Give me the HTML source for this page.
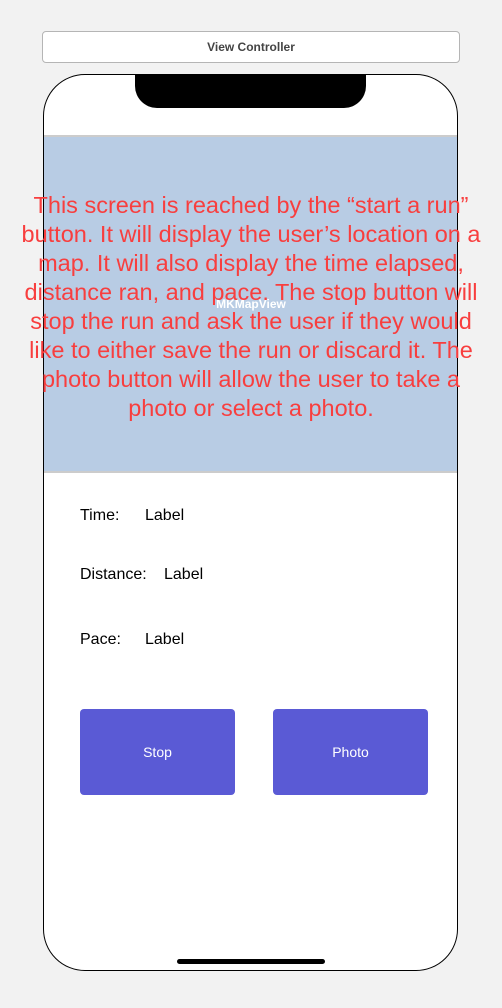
<!DOCTYPE html>
<html><head><style>
body{margin:0;width:502px;height:1008px;background:#f2f2f2;position:relative;overflow:hidden;font-family:"Liberation Sans",sans-serif}
.t{position:absolute;left:42px;top:31px;width:416px;height:30px;background:#fff;border:1px solid #b5b5b5;border-radius:4px;text-align:center;line-height:30px;font-size:12px;font-weight:bold;color:#444}
.ph{position:absolute;left:43px;top:74px;width:413px;height:895px;background:#fff;border:1.5px solid #000;border-radius:42px;overflow:hidden}
.notch{position:absolute;left:135px;top:75px;width:231px;height:33px;background:#000;border-radius:0 0 22px 22px}
.map{position:absolute;left:44px;top:135px;width:413px;height:338px;background:#b8cce4;border-top:2px solid #ccc;border-bottom:2px solid #ccc;box-sizing:border-box}
.mk{position:absolute;left:0;width:502px;top:297px;text-align:center;color:#fff;font-weight:bold;font-size:12px}
.red{position:absolute;left:-20px;width:542px;top:191px;text-align:center;color:#f83e3e;font-size:23.5px;line-height:29px;white-space:nowrap}
.l{position:absolute;font-size:16px;color:#000}
.b{position:absolute;top:709px;width:155px;height:86px;background:#5a5ad5;border-radius:4px;color:#fff;font-size:14px;text-align:center;line-height:86px}
.home{position:absolute;left:177px;top:959px;width:148px;height:5px;background:#000;border-radius:3px}
</style></head><body>
<div class="t">View Controller</div>
<div class="ph"></div>
<div class="notch"></div>
<div class="map"></div>
<div class="mk">MKMapView</div>
<div class="red">This screen is reached by the “start a run”<br>button. It will display the user’s location on a<br>map. It will also display the time elapsed,<br>distance ran, and pace. The stop button will<br>stop the run and ask the user if they would<br>like to either save the run or discard it. The<br>photo button will allow the user to take a<br>photo or select a photo.</div>
<div class="l" style="left:80px;top:507px">Time:</div>
<div class="l" style="left:145px;top:507px">Label</div>
<div class="l" style="left:80px;top:566px">Distance:</div>
<div class="l" style="left:164px;top:566px">Label</div>
<div class="l" style="left:80px;top:631px">Pace:</div>
<div class="l" style="left:145px;top:631px">Label</div>
<div class="b" style="left:80px">Stop</div>
<div class="b" style="left:273px">Photo</div>
<div class="home"></div>
</body></html>
